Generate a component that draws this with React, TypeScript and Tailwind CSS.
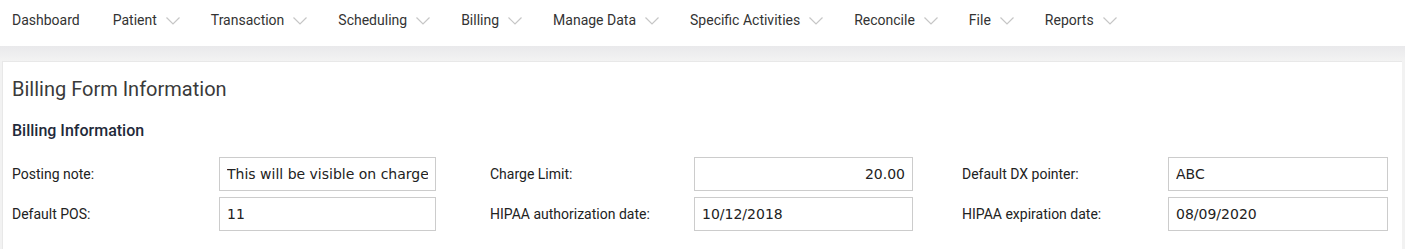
const menu = [
  { label: 'Dashboard', dropdown: false },
  { label: 'Patient', dropdown: true },
  { label: 'Transaction', dropdown: true },
  { label: 'Scheduling', dropdown: true },
  { label: 'Billing', dropdown: true },
  { label: 'Manage Data', dropdown: true },
  { label: 'Specific Activities', dropdown: true },
  { label: 'Reconcile', dropdown: true },
  { label: 'File', dropdown: true },
  { label: 'Reports', dropdown: true },
];

type Field = { label: string; value: string; align?: 'right' };

const columns: Field[][] = [
  [
    { label: 'Posting note:', value: 'This will be visible on charge' },
    { label: 'Default POS:', value: '11' },
  ],
  [
    { label: 'Charge Limit:', value: '20.00', align: 'right' },
    { label: 'HIPAA authorization date:', value: '10/12/2018' },
  ],
  [
    { label: 'Default DX pointer:', value: 'ABC' },
    { label: 'HIPAA expiration date:', value: '08/09/2020' },
  ],
];

function Caret() {
  return (
    <svg width="14" height="8" viewBox="0 0 14 8" className="ml-[9px] mt-[2px]" fill="none">
      <polyline points="0.5,0.5 7,7 13.5,0.5" stroke="#c6c6c6" strokeWidth="1.2" />
    </svg>
  );
}

function TopNav() {
  return (
    <nav className="h-[46px] bg-white pl-3 pt-[12px] relative z-10">
      <ul className="flex items-center gap-[31px]">
        {menu.map((item) => (
          <li
            key={item.label}
            className={`flex items-center text-[14px] leading-4 text-[#333] cursor-pointer ${item.dropdown ? '' : 'pr-[2px]'}`}
          >
            <span>{item.label}</span>
            {item.dropdown && <Caret />}
          </li>
        ))}
      </ul>
    </nav>
  );
}

function FieldColumn({
  fields,
  width,
  labelWidth,
  inputWidth,
}: {
  fields: Field[];
  width: string;
  labelWidth: string;
  inputWidth: string;
}) {
  return (
    <div className={`${width} flex flex-col gap-[6px]`}>
      {fields.map((f) => (
        <div key={f.label} className="flex items-center">
          <label className={`${labelWidth} shrink-0 text-[14px] text-[#222]`}>{f.label}</label>
          <input
            readOnly
            value={f.value}
            className={`${inputWidth} h-[34px] border border-[#cccccc] bg-white px-[7px] text-[14px] text-[#222] outline-none font-['DejaVu_Sans',sans-serif] ${
              f.align === 'right' ? 'text-right' : ''
            }`}
          />
        </div>
      ))}
    </div>
  );
}

export default function App() {
  return (
    <div className="w-[1405px] h-[249px] bg-[#f2f2f2] overflow-hidden font-['Roboto',sans-serif]">
      <TopNav />
      <div className="h-[15px] bg-gradient-to-b from-[#e9e9eb] to-[#f3f3f3]" />
      <div className="ml-[2px] mr-[3px] bg-white border-t border-l border-[#e8e8e8] pl-[9px] pt-[15px] pb-[20px]">
        <h1 className="text-[20px] font-normal text-[#3a3a3a] leading-6">Billing Form Information</h1>
        <h2 className="mt-[20px] text-[16px] font-medium text-[#1f2a3a] leading-5">Billing Information</h2>
        <div className="mt-[16px] flex">
          <FieldColumn fields={columns[0]} width="w-[478px]" labelWidth="w-[207px]" inputWidth="w-[217px]" />
          <FieldColumn fields={columns[1]} width="w-[472px]" labelWidth="w-[204px]" inputWidth="w-[219px]" />
          <FieldColumn fields={columns[2]} width="w-[430px]" labelWidth="w-[206px]" inputWidth="w-[220px]" />
        </div>
      </div>
    </div>
  );
}
